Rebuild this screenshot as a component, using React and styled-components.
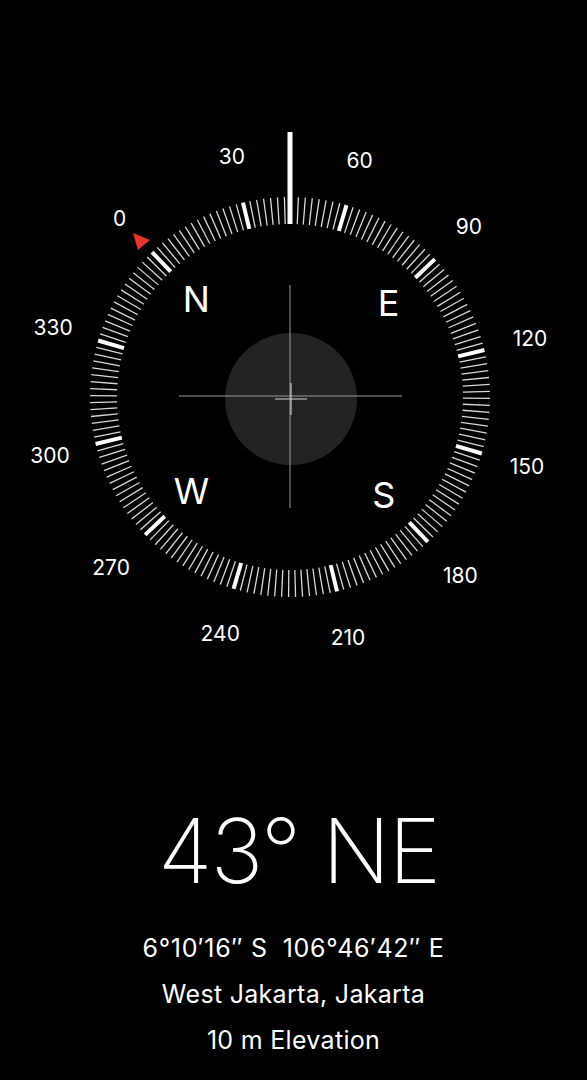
import React from 'react'
import styled, { createGlobalStyle } from 'styled-components'

const GlobalStyle = createGlobalStyle`
  html, body {
    margin: 0;
    padding: 0;
    background: #000;
  }
  body {
    font-family: Inter, "Noto Sans", "Liberation Sans", sans-serif;
    color: #fff;
  }
`

const CX = 290
const CY = 397
const HEADING = 43.6
const OUTER = 200
const INNER = 173

const polar = (deg, r) => {
  const a = ((deg - HEADING) * Math.PI) / 180
  return [CX + r * Math.sin(a), CY - r * Math.cos(a)]
}

const ticks = Array.from({ length: 180 }, (_, i) => i * 2)
const labels = Array.from({ length: 12 }, (_, i) => i * 30)
const cardinals = [
  ['N', 0],
  ['E', 90],
  ['S', 180],
  ['W', 270],
]

function Compass() {
  return (
    <Dial viewBox="0 0 587 680" width="587" height="680">
      {ticks.map((d) => {
        const [x1, y1] = polar(d, OUTER)
        const [x2, y2] = polar(d, INNER)
        const major = d % 30 === 0
        return (
          <line
            key={d}
            x1={x1}
            y1={y1}
            x2={x2}
            y2={y2}
            stroke={major ? '#fff' : '#d8d8d8'}
            strokeWidth={major ? 4 : 1.3}
          />
        )
      })}

      <rect x="287.5" y="132" width="5" height="92" fill="#fff" />

      <polygon points="133,233 150,240 138,250" fill="#e8352a" />

      {labels.map((d) => {
        const [x, y] = polar(d, 247)
        return (
          <DegreeText key={d} x={x} y={y}>
            {d}
          </DegreeText>
        )
      })}

      {cardinals.map(([t, d]) => {
        const [x, y] = polar(d, 136)
        return (
          <CardinalText key={t} x={x} y={y}>
            {t}
          </CardinalText>
        )
      })}

      <circle cx="291" cy="399" r="66" fill="#232323" />
      <line x1="290" y1="285" x2="290" y2="508" stroke="#9a9a9a" strokeWidth="1" />
      <line x1="179" y1="396" x2="402" y2="396" stroke="#9a9a9a" strokeWidth="1" />
      <line x1="275" y1="399" x2="307" y2="399" stroke="#b8b8b8" strokeWidth="1.2" />
      <line x1="291" y1="383" x2="291" y2="415" stroke="#c8c8c8" strokeWidth="1.2" />
    </Dial>
  )
}

export default function App() {
  return (
    <Screen>
      <GlobalStyle />
      <Compass />
      <Readout>
        <Heading>43° NE</Heading>
        <InfoLine $split>
          <span>6°10′16″ S</span>
          <span>106°46′42″ E</span>
        </InfoLine>
        <InfoLine>West Jakarta, Jakarta</InfoLine>
        <InfoLine>10 m Elevation</InfoLine>
      </Readout>
    </Screen>
  )
}

const Screen = styled.div`
  width: 587px;
  height: 1080px;
  background: #000;
  display: flex;
  flex-direction: column;
  overflow: hidden;
`

const Dial = styled.svg`
  display: block;
  flex: none;
`

const DegreeText = styled.text`
  fill: #fff;
  font-family: Inter, "Noto Sans", sans-serif;
  font-size: 21px;
  text-anchor: middle;
  dominant-baseline: central;
`

const CardinalText = styled.text`
  fill: #fff;
  font-family: Inter, "Noto Sans", sans-serif;
  font-size: 36px;
  text-anchor: middle;
  dominant-baseline: central;
`

const Readout = styled.div`
  display: flex;
  flex-direction: column;
  align-items: center;
  margin-top: 126px;
`

const Heading = styled.div`
  font-size: 89px;
  font-weight: 200;
  line-height: 90px;
  letter-spacing: -2px;
  padding-left: 10px;
  margin-bottom: 29px;
`

const InfoLine = styled.div`
  display: flex;
  gap: ${(p) => (p.$split ? '15px' : '0')};
  font-size: 25px;
  line-height: 46px;
  letter-spacing: ${(p) => (p.$split ? '0.7px' : '0.3px')};
`
